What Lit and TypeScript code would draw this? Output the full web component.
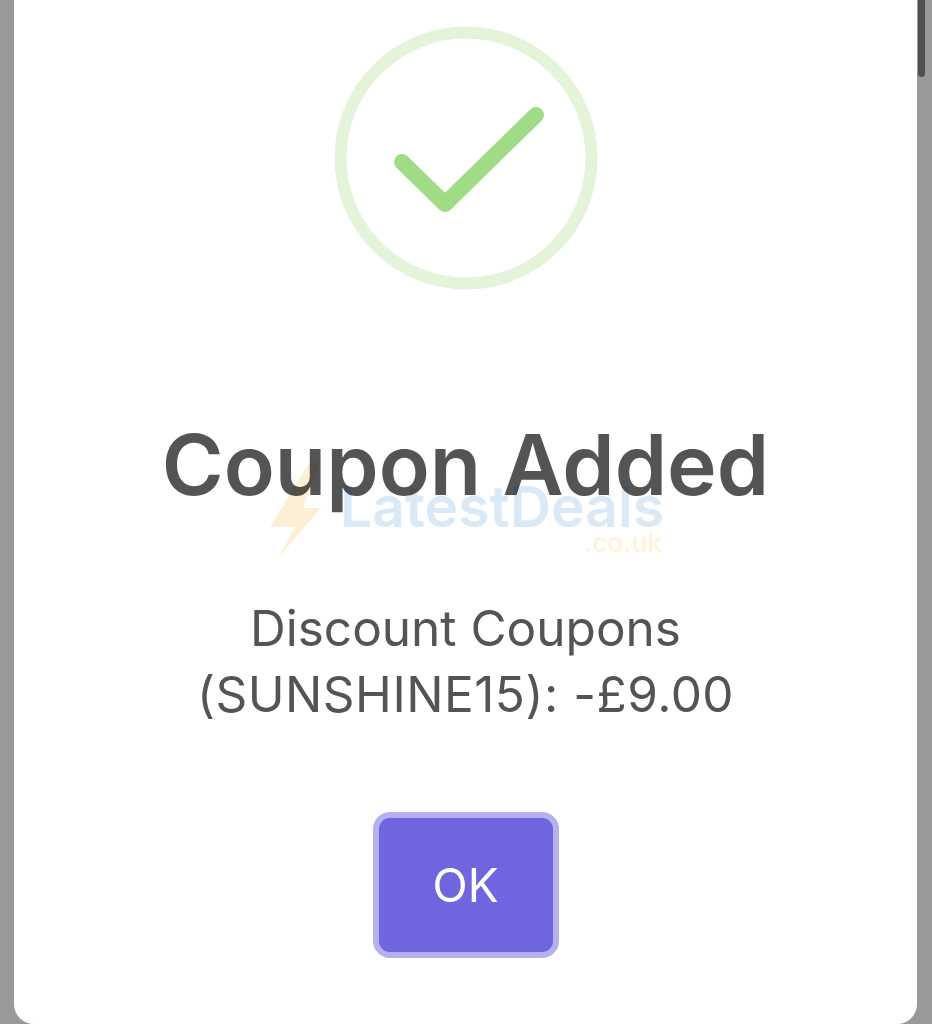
/**
 * Coupon added confirmation dialog
 */

import { LitElement, html, css } from 'lit';
import { customElement } from 'lit/decorators.js';

@customElement('app-root')
export class AppRoot extends LitElement {
  static override styles = css`
    :host {
      display: block;
      position: relative;
      width: 932px;
      height: 1024px;
      overflow: hidden;
      background: #999999;
      font-family: Inter, "Liberation Sans", sans-serif;
    }

    .modal {
      box-sizing: border-box;
      width: 903px;
      height: 1024px;
      margin-left: 14px;
      padding-top: 26px;
      background: #ffffff;
      border-radius: 0 0 20px 20px;
      display: flex;
      flex-direction: column;
      align-items: center;
      color: #545454;
    }

    .success {
      display: block;
      width: 264px;
      height: 264px;
      flex: none;
    }

    .title {
      margin: 125px 0 0;
      font-size: 84px;
      line-height: 100px;
      font-weight: 600;
    }

    .message {
      margin: 80px 0 0;
      font-size: 49.5px;
      line-height: 66px;
      font-weight: 400;
      text-align: center;
    }

    .code {
      letter-spacing: 0.5px;
    }

    .ok {
      box-sizing: border-box;
      width: 186px;
      height: 146px;
      margin-top: 85px;
      border: 6px solid #b5b0f0;
      border-radius: 17px;
      background: #6f66df;
      color: #ffffff;
      font: 400 46px Inter, "Liberation Sans", sans-serif;
      padding: 0;
    }

    .thumb {
      position: absolute;
      left: 918px;
      top: -8px;
      width: 7px;
      height: 85px;
      border-radius: 4px;
      background: #505050;
    }

    .watermark {
      position: absolute;
      left: 268px;
      top: 460px;
      width: 396px;
      height: 100px;
      mix-blend-mode: multiply;
      pointer-events: none;
    }

    .bolt {
      position: absolute;
      left: 0;
      top: 0;
      width: 54px;
      height: 100px;
    }

    .brand {
      position: absolute;
      left: 72px;
      top: 19px;
      font-size: 57px;
      line-height: 56px;
      font-weight: 600;
      color: #d9e9f6;
      white-space: nowrap;
    }

    .tld {
      position: absolute;
      right: 2px;
      top: 71px;
      font-size: 26px;
      line-height: 24px;
      font-weight: 600;
      color: #fdf4dc;
    }
  `;

  override render() {
    return html`
      <div class="modal">
        <svg class="success" viewBox="0 0 264 264" fill="none">
          <circle cx="132" cy="132" r="125.5" stroke="#e3f4da" stroke-width="12" />
          <path
            d="M68 136 L111 178 L202 89"
            stroke="#a0db85"
            stroke-width="16"
            stroke-linecap="round"
            stroke-linejoin="round"
          />
        </svg>
        <h2 class="title">Coupon Added</h2>
        <div class="message">Discount Coupons<br /><span class="code">(SUNSHINE15): -£9.00</span></div>
        <button class="ok">OK</button>
      </div>
      <div class="thumb"></div>
      <div class="watermark">
        <svg class="bolt" viewBox="0 0 54 100">
          <path d="M41 3 L52 3 L35 48 L53 48 L10 98 L27 67 L2 67 Z" fill="#fbf0d5" />
        </svg>
        <div class="brand">LatestDeals</div>
        <div class="tld">.co.uk</div>
      </div>
    `;
  }
}

declare global {
  interface HTMLElementTagNameMap {
    'app-root': AppRoot;
  }
}
